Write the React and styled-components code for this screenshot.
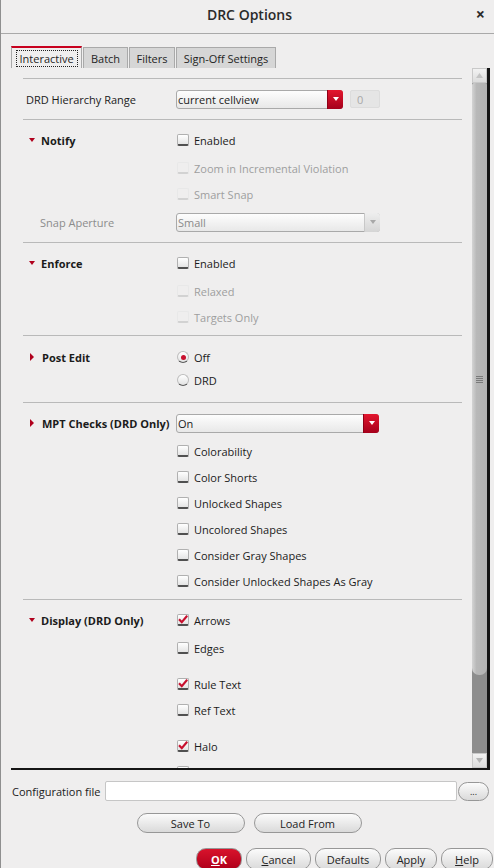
import React from 'react'
import styled, {createGlobalStyle} from 'styled-components'

const GlobalStyle = createGlobalStyle`
  html, body {
    margin: 0;
    padding: 0;
    background: #efeeee;
  }
  body {
    font-family: "Open Sans", "Noto Sans", sans-serif;
    font-size: 11px;
    color: #1b1b1b;
    overflow: hidden;
  }
  * {
    box-sizing: border-box;
  }
`

const Window = styled.div`
  width: 494px;
  height: 868px;
  display: flex;
  flex-direction: column;
  background: #efeeee;
  border-left: 1px solid #8f8f8f;
  overflow: hidden;
`

const TitleBar = styled.div`
  height: 34px;
  flex: none;
  display: grid;
  grid-template-columns: 1fr auto 1fr;
  align-items: center;
  border-bottom: 1px solid #a9a9a9;
`

const Title = styled.div`
  grid-column: 2;
  font-size: 14px;
  font-weight: 600;
  color: #2a2a2a;
  padding-bottom: 5px;
  padding-left: 4px;
`

const Close = styled.div`
  justify-self: end;
  padding-right: 9px;
  padding-bottom: 5px;
  font-size: 16px;
  font-weight: 700;
  color: #2a2a2a;
`

const Body = styled.div`
  flex: 1;
  display: flex;
  flex-direction: column;
  padding: 0 5px 0 10px;
`

const TabBar = styled.div`
  display: flex;
  align-items: flex-end;
  margin-top: 12px;
  height: 22px;
`

const Tab = styled.div`
  width: ${p => p.$w}px;
  height: ${p => (p.$active ? 22 : 21)}px;
  display: flex;
  align-items: center;
  justify-content: center;
  border: 1px solid #a9a9a9;
  border-bottom: none;
  border-top: ${p => (p.$active ? '2px solid #c8001e' : '1px solid #a9a9a9')};
  background: ${p => (p.$active ? '#efeeee' : '#d6d6d6')};
  color: #1f1f1f;
  margin-right: 1px;
  padding-top: ${p => (p.$active ? 0 : 1)}px;
`

const Focus = styled.span`
  border: 1px dotted #222;
  padding: 0 3px;
  height: 17px;
  line-height: 15px;
  width: 62px;
  text-align: center;
`

const Panel = styled.div`
  width: 479px;
  height: 702px;
  flex: none;
  display: flex;
  border-right: 3px solid #151515;
  border-bottom: 2px solid #151515;
`

const Scroll = styled.div`
  flex: 1;
  overflow: hidden;
`

const Content = styled.div`
  padding: 10px 10px 0 12px;
`

const Section = styled.div`
  border-top: 1px solid #b9b9b9;
  padding: ${p => p.$pt ?? 7}px 0 ${p => p.$pb ?? 5}px;
`

const Row = styled.div`
  display: grid;
  grid-template-columns: 153px 1fr;
  align-items: center;
  height: ${p => p.$h ?? 26}px;
  margin-top: ${p => p.$mt ?? 0}px;
`

const LabelCell = styled.div`
  display: flex;
  align-items: center;
  padding-left: ${p => p.$indent ?? 3}px;
  color: ${p => (p.$muted ? '#8c8c8c' : '#1b1b1b')};
  font-weight: ${p => (p.$bold ? 700 : 400)};
  align-self: ${p => (p.$top ? 'start' : 'center')};
  margin-top: ${p => (p.$top ? 5 : 0)}px;
`

const Arrow = styled.span`
  width: 0;
  height: 0;
  margin-right: 6px;
  flex: none;
  ${p =>
    p.$open
      ? `border-left: 3.5px solid transparent;
         border-right: 3.5px solid transparent;
         border-top: 4px solid #b0001d;`
      : `margin-left: 1px;
         margin-right: 8px;
         border-top: 4px solid transparent;
         border-bottom: 4px solid transparent;
         border-left: 4px solid #b0001d;`}
`

const Control = styled.div`
  display: flex;
  align-items: center;
`

const Combo = styled.div`
  width: ${p => p.$w}px;
  height: 19px;
  display: flex;
  align-items: center;
  justify-content: space-between;
  border: 1px solid #a9a9a9;
  border-radius: 3px;
  background: linear-gradient(#fdfdfd, #e8e8e8);
  color: ${p => (p.$disabled ? '#8a8a8a' : '#1b1b1b')};
  padding-left: 1px;
`

const DropBtn = styled.span`
  width: 16px;
  height: 19px;
  margin-right: -1px;
  border-radius: 0 3px 3px 0;
  display: flex;
  align-items: center;
  justify-content: center;
  background: ${p =>
    p.$disabled ? 'linear-gradient(#eeeeee, #d5d5d5)' : 'linear-gradient(#e3162e, #a5001b)'};
  border-left: 1px solid ${p => (p.$disabled ? '#c8c8c8' : '#8e0016')};

  &::after {
    content: "";
    border-left: 3.5px solid transparent;
    border-right: 3.5px solid transparent;
    border-top: 4px solid ${p => (p.$disabled ? '#a8a8a8' : '#ffffff')};
  }
`

const Spin = styled.div`
  width: 30px;
  height: 18px;
  margin-left: 7px;
  padding-left: 6px;
  display: flex;
  align-items: center;
  background: #e5e5e5;
  border: 1px solid #dcdcdc;
  border-radius: 2px;
  color: #a8a8a8;
`

const Box = styled.span`
  width: 12px;
  height: 12px;
  flex: none;
  margin-left: 1px;
  border-radius: 2px;
  display: flex;
  align-items: center;
  justify-content: center;
  border: 1px solid ${p => (p.$disabled ? '#e8e8e8' : '#b0b0b0')};
  border-bottom: 2px solid ${p => (p.$disabled ? '#d2d2d2' : '#505050')};
  background: ${p => (p.$disabled ? 'transparent' : 'linear-gradient(#ffffff, #e4e4e4)')};
`

const Round = styled.span`
  width: 12px;
  height: 12px;
  flex: none;
  margin-left: 1px;
  border-radius: 50%;
  display: flex;
  align-items: center;
  justify-content: center;
  border: 1px solid #bdbdbd;
  border-bottom-color: #5a5a5a;
  background: linear-gradient(#ffffff, #e2e2e2);

  &::after {
    content: "";
    display: ${p => (p.$on ? 'block' : 'none')};
    width: 5px;
    height: 5px;
    border-radius: 50%;
    background: #c8102e;
  }
`

const OptText = styled.span`
  margin-left: 5px;
  color: ${p => (p.$disabled ? '#9e9e9e' : '#1b1b1b')};
`

const ScrollBar = styled.div`
  width: 15px;
  flex: none;
  display: flex;
  flex-direction: column;
  background: #8d8d8d;
`

const StepBtn = styled.div`
  height: 15px;
  flex: none;
  display: flex;
  align-items: center;
  justify-content: center;
  background: linear-gradient(#f2f2f2, #dcdcdc);
  border: 1px solid #c9c9c9;

  &::after {
    content: "";
    width: 7px;
    height: 5px;
    background: ${p => (p.$down ? '#b5b5b5' : '#c4c4c4')};
    clip-path: ${p =>
      p.$down ? 'polygon(0 0, 100% 0, 50% 100%)' : 'polygon(50% 0, 100% 100%, 0 100%)'};
  }
`

const Thumb = styled.div`
  height: 592px;
  flex: none;
  display: flex;
  flex-direction: column;
  align-items: center;
  justify-content: center;
  gap: 1px;
  background: linear-gradient(90deg, #d4d4d4, #b8b8b8 30%, #b3b3b3);
  border-radius: 2px 2px 7px 7px;
`

const Grip = styled.span`
  width: 7px;
  height: 1px;
  background: #7a7a7a;
`

const Track = styled.div`
  flex: 1;
`

const ConfigRow = styled.div`
  display: flex;
  align-items: center;
  margin-top: 11px;
  height: 20px;
  padding-left: 1px;
`

const ConfigLabel = styled.span`
  width: 93px;
  flex: none;
`

const PathInput = styled.div`
  width: 352px;
  height: 20px;
  background: #ffffff;
  border: 1px solid #c6c6c6;
  border-radius: 2px;
`

const Pill = styled.div`
  width: ${p => p.$w}px;
  height: ${p => p.$h ?? 20}px;
  flex: none;
  display: flex;
  align-items: center;
  justify-content: center;
  border-radius: 10px;
  border: 1px solid #979797;
  background: ${p =>
    p.$primary ? 'linear-gradient(#d8132c, #b0001b)' : 'linear-gradient(#fbfbfb, #dadada)'};
  color: ${p => (p.$primary ? '#ffffff' : '#222222')};
  font-weight: ${p => (p.$primary ? 700 : 400)};
  font-size: ${p => (p.$small ? 9 : 11)}px;
  margin-left: ${p => p.$ml ?? 0}px;
`

const SaveRow = styled.div`
  display: flex;
  justify-content: center;
  gap: 9px;
  margin-top: 12px;
  padding-right: 2px;
`

const ActionRow = styled.div`
  display: flex;
  justify-content: flex-end;
  gap: 4px;
  margin-top: 15px;
  margin-right: -4px;
`

const Key = styled.span`
  text-decoration: underline;
`

function Check({label, checked, disabled}) {
    return (
        <Control>
            <Box $disabled={disabled}>
                {checked && (
                    <svg width="10" height="9" viewBox="0 0 10 9">
                        <path d="M1 4.2 L3.8 7.2 L9.2 0.8" fill="none" stroke="#c8102e" strokeWidth="2.2"/>
                    </svg>
                )}
            </Box>
            {label && <OptText $disabled={disabled}>{label}</OptText>}
        </Control>
    )
}

function Radio({label, on}) {
    return (
        <Control>
            <Round $on={on}/>
            <OptText>{label}</OptText>
        </Control>
    )
}

function Head({children, open}) {
    return (
        <LabelCell $indent={6} $bold>
            <Arrow $open={open}/>
            {children}
        </LabelCell>
    )
}

const mptOptions = [
    'Colorability',
    'Color Shorts',
    'Unlocked Shapes',
    'Uncolored Shapes',
    'Consider Gray Shapes',
    'Consider Unlocked Shapes As Gray',
]

const App = () => {
    return (
        <Window>
            <GlobalStyle/>
            <TitleBar>
                <Title>DRC Options</Title>
                <Close>×</Close>
            </TitleBar>

            <Body>
                <TabBar>
                    <Tab $w={71} $active><Focus>Interactive</Focus></Tab>
                    <Tab $w={45}>Batch</Tab>
                    <Tab $w={46}>Filters</Tab>
                    <Tab $w={100}>Sign-Off Settings</Tab>
                </TabBar>

                <Panel>
                    <Scroll>
                        <Content>
                            <Section $pb={7}>
                                <Row>
                                    <LabelCell>DRD Hierarchy Range</LabelCell>
                                    <Control>
                                        <Combo $w={167}>current cellview<DropBtn/></Combo>
                                        <Spin>0</Spin>
                                    </Control>
                                </Row>
                            </Section>

                            <Section>
                                <Row>
                                    <Head open>Notify</Head>
                                    <Check label="Enabled"/>
                                </Row>
                                <Row $mt={2}>
                                    <span/>
                                    <Check label="Zoom in Incremental Violation" disabled/>
                                </Row>
                                <Row>
                                    <span/>
                                    <Check label="Smart Snap" disabled/>
                                </Row>
                                <Row $h={30}>
                                    <LabelCell $indent={17} $muted>Snap Aperture</LabelCell>
                                    <Control>
                                        <Combo $w={204} $disabled>Small<DropBtn $disabled/></Combo>
                                    </Control>
                                </Row>
                            </Section>

                            <Section>
                                <Row>
                                    <Head open>Enforce</Head>
                                    <Check label="Enabled"/>
                                </Row>
                                <Row $mt={2}>
                                    <span/>
                                    <Check label="Relaxed" disabled/>
                                </Row>
                                <Row>
                                    <span/>
                                    <Check label="Targets Only" disabled/>
                                </Row>
                            </Section>

                            <Section $pt={9} $pb={11}>
                                <Row $h={24}>
                                    <Head>Post Edit</Head>
                                    <Radio label="Off" on/>
                                </Row>
                                <Row $h={22}>
                                    <span/>
                                    <Radio label="DRD"/>
                                </Row>
                            </Section>

                            <Section>
                                <Row>
                                    <Head>MPT Checks (DRD Only)</Head>
                                    <Control>
                                        <Combo $w={203}>On<DropBtn/></Combo>
                                    </Control>
                                </Row>
                                {mptOptions.map((o, i) => (
                                    <Row key={o} $mt={i === 0 ? 2 : 0}>
                                        <span/>
                                        <Check label={o}/>
                                    </Row>
                                ))}
                            </Section>

                            <Section>
                                <Row>
                                    <Head open>Display (DRD Only)</Head>
                                    <Check label="Arrows" checked/>
                                </Row>
                                <Row $mt={2}>
                                    <span/>
                                    <Check label="Edges"/>
                                </Row>
                                <Row $mt={10}>
                                    <span/>
                                    <Check label="Rule Text" checked/>
                                </Row>
                                <Row>
                                    <span/>
                                    <Check label="Ref Text"/>
                                </Row>
                                <Row $mt={10}>
                                    <span/>
                                    <Check label="Halo" checked/>
                                </Row>
                                <Row>
                                    <span/>
                                    <Check/>
                                </Row>
                            </Section>
                        </Content>
                    </Scroll>

                    <ScrollBar>
                        <StepBtn/>
                        <Thumb>
                            <Grip/><Grip/><Grip/><Grip/>
                        </Thumb>
                        <Track/>
                        <StepBtn $down/>
                    </ScrollBar>
                </Panel>

                <ConfigRow>
                    <ConfigLabel>Configuration file</ConfigLabel>
                    <PathInput/>
                    <Pill $w={31} $h={19} $ml={1} $small>...</Pill>
                </ConfigRow>

                <SaveRow>
                    <Pill $w={108}>Save To</Pill>
                    <Pill $w={108}>Load From</Pill>
                </SaveRow>

                <ActionRow>
                    <Pill $w={46} $h={22} $primary><Key>O</Key>K</Pill>
                    <Pill $w={65} $h={22}><Key>C</Key>ancel</Pill>
                    <Pill $w={66} $h={22}>Defaults</Pill>
                    <Pill $w={52} $h={22}>Apply</Pill>
                    <Pill $w={52} $h={22}><Key>H</Key>elp</Pill>
                </ActionRow>
            </Body>
        </Window>
    )
}

export default App
